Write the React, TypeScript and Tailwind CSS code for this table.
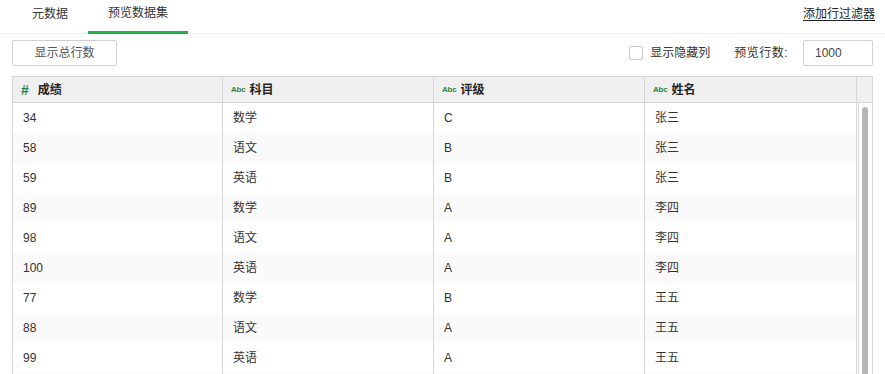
const ROWS = [
    ['34', '数学', 'C', '张三'],
    ['58', '语文', 'B', '张三'],
    ['59', '英语', 'B', '张三'],
    ['89', '数学', 'A', '李四'],
    ['98', '语文', 'A', '李四'],
    ['100', '英语', 'A', '李四'],
    ['77', '数学', 'B', '王五'],
    ['88', '语文', 'A', '王五'],
    ['99', '英语', 'A', '王五'],
    ['65', '数学', 'C', '赵六'],
];

const COLUMNS = [
    { name: '成绩', type: 'num' },
    { name: '科目', type: 'str' },
    { name: '评级', type: 'str' },
    { name: '姓名', type: 'str' },
];

const WIDTHS = ['w-[210px]', 'w-[211px]', 'w-[211px]', 'w-[212px]'];

function TypeTag({ type }: { type: string }) {
    if (type === 'num') {
        return <span className="text-[14px] font-bold leading-none text-[#2e8540] mr-[9px]">#</span>;
    }
    return <span className="text-[8px] font-bold leading-none text-[#2e8540] mr-[4px] tracking-tight">Abc</span>;
}

export default function App() {
    return (
        <div
            className="w-[885px] h-[374px] overflow-hidden bg-white text-[12px] text-[#333]"
            style={{ fontFamily: '"Liberation Sans", "Noto Sans CJK SC", sans-serif' }}
        >
            {/* tabs */}
            <div className="flex items-stretch h-[34px] border-b border-[#eeeeee] pl-[12px] pr-[10px]">
                <div className="w-[76px] flex items-center justify-center pb-[6px]">元数据</div>
                <div className="w-[100px] flex items-center justify-center pb-[6px] border-b-[3px] border-[#22b24c] -mb-px">
                    预览数据集
                </div>
                <div className="flex-1" />
                <div className="flex items-center pb-[5px] underline underline-offset-2 text-[#222]">添加行过滤器</div>
            </div>

            {/* toolbar */}
            <div className="flex items-center h-[26px] mt-[6px] mx-[12px]">
                <button className="w-[105px] h-[26px] border border-[#d0d0d0] rounded-[2px] text-[#555] bg-white">
                    显示总行数
                </button>
                <div className="flex-1" />
                <div className="w-[14px] h-[14px] border border-[#c8c8c8] rounded-[2px] bg-white mr-[7px]" />
                <span className="text-[#333]">显示隐藏列</span>
                <span className="ml-[24px] text-[#333] tracking-[0.5px]">预览行数:</span>
                <div className="ml-[15px] w-[70px] h-[26px] border border-[#d0d0d0] rounded-[2px] flex items-center pl-[11px] text-[#444]">
                    1000
                </div>
            </div>

            {/* table */}
            <div className="mt-[10px] mx-[12px] border border-[#d6d6d6] border-b-0">
                <div className="flex h-[26px] bg-[#efefef] border-b border-[#d6d6d6]">
                    {COLUMNS.map((c, i) => (
                        <div
                            key={c.name}
                            className={`${WIDTHS[i]} shrink-0 flex items-center pl-[8px] border-r border-[#d6d6d6] font-bold text-[12px] text-[#222]`}
                        >
                            <TypeTag type={c.type} />
                            {c.name}
                        </div>
                    ))}
                    <div className="flex-1" />
                </div>
                <div className="flex">
                    <div className="shrink-0">
                        {ROWS.map((r, ri) => (
                            <div key={ri} className={`flex h-[30px] ${ri % 2 === 1 ? 'bg-[#fafafa]' : 'bg-white'}`}>
                                {r.map((v, ci) => (
                                    <div
                                        key={ci}
                                        className={`${WIDTHS[ci]} shrink-0 flex items-center pl-[10px] border-r border-[#d6d6d6] text-[#333]`}
                                    >
                                        {v}
                                    </div>
                                ))}
                            </div>
                        ))}
                    </div>
                    <div className="flex-1 border-l border-[#d6d6d6] ml-px pt-[4px] flex justify-center">
                        <div className="w-[6px] h-[400px] bg-[#b7b7b7] rounded-t-[3px] ml-[-1px]" />
                    </div>
                </div>
            </div>
        </div>
    );
}
